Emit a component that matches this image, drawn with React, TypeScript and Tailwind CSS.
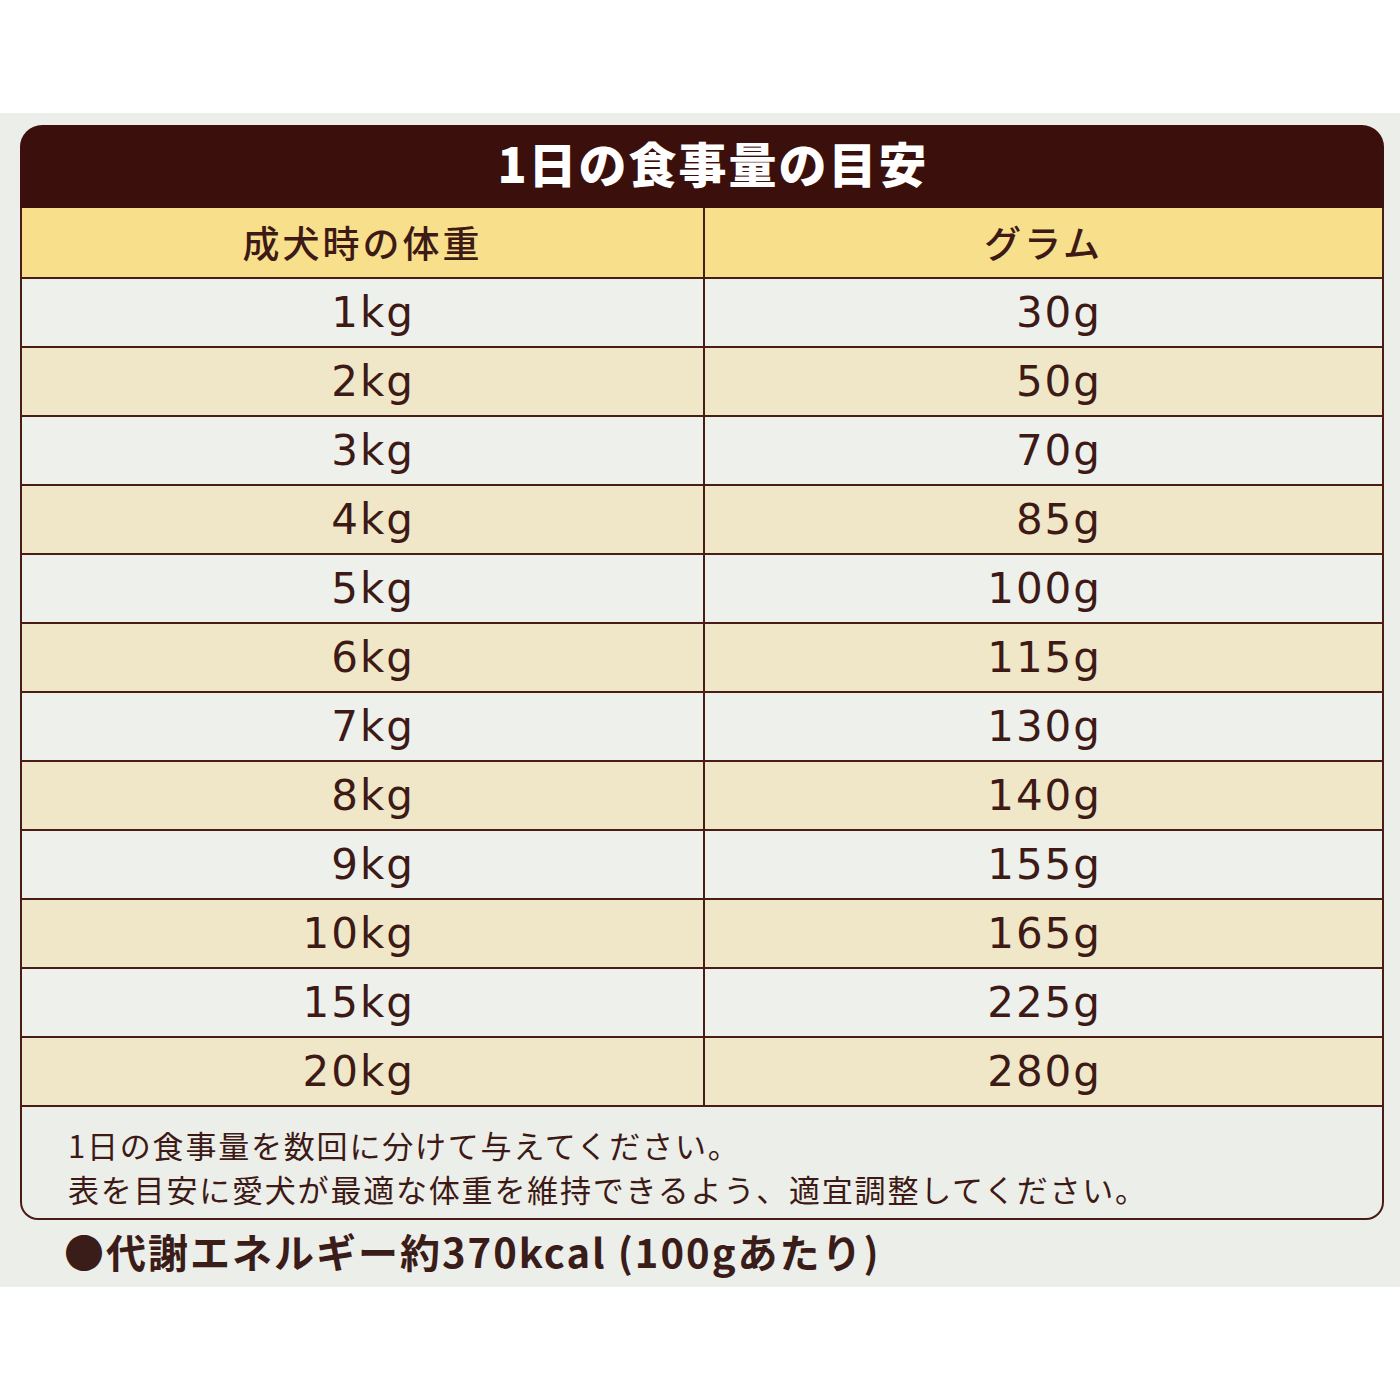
const rows: [string, string][] = [
  ["1kg", "30g"],
  ["2kg", "50g"],
  ["3kg", "70g"],
  ["4kg", "85g"],
  ["5kg", "100g"],
  ["6kg", "115g"],
  ["7kg", "130g"],
  ["8kg", "140g"],
  ["9kg", "155g"],
  ["10kg", "165g"],
  ["15kg", "225g"],
  ["20kg", "280g"],
];

const jp = { fontFamily: '"Noto Sans CJK JP", "Noto Sans", sans-serif' };
const num = { fontFamily: '"DejaVu Sans", "Noto Sans CJK JP", sans-serif' };

export default function App() {
  return (
    <div className="min-h-[1400px] bg-white text-[#3d1a15]" style={jp}>
      <div className="h-[113px]" />
      <div className="h-[1174px] bg-[#eceee9] pt-[12px] pl-[20px] pr-[16px]">
        {/* title bar */}
        <div className="flex h-[83px] items-center justify-center rounded-t-[22px] bg-[#3b0f0c] pb-[10px] pl-[22px]">
          <span className="text-[48px] font-black leading-none tracking-[2px] text-white">
            1日の食事量の目安
          </span>
        </div>

        {/* table */}
        <div className="border-x-2 border-[#4a1c16]">
          <div className="grid h-[69px] grid-cols-[683px_1fr] bg-[#f8df8c] text-[37px] font-medium tracking-[3px]">
            <div className="flex items-center justify-center border-r-2 border-[#4a1c16]">成犬時の体重</div>
            <div className="flex items-center justify-center">グラム</div>
          </div>
          {rows.map(([kg, g], i) => (
            <div
              key={kg}
              className={`grid h-[69px] grid-cols-[683px_1fr] border-t-2 border-[#4a1c16] text-[42px] tracking-[2px] ${
                i % 2 === 0 ? "bg-[#eef0ec]" : "bg-[#f0e7c9]"
              }`}
              style={num}
            >
              <div className="flex items-center justify-end border-r-2 border-[#4a1c16] pr-[288px]">{kg}</div>
              <div className="flex items-center justify-end pr-[280px]">{g}</div>
            </div>
          ))}
        </div>

        {/* note */}
        <div className="h-[115px] rounded-b-[18px] border-2 border-[#4a1c16] bg-[#eceee9] pl-[46px] pt-[16px] text-[31px] leading-[44px] tracking-[1.8px]">
          <div>1日の食事量を数回に分けて与えてください。</div>
          <div>表を目安に愛犬が最適な体重を維持できるよう、適宜調整してください。</div>
        </div>

        <div className="pl-[44px] pt-[6px] text-[40px] font-bold leading-[50px] tracking-[2px] text-[#3a1c18]">
          ●代謝エネルギー約370kcal (100gあたり)
        </div>
      </div>
    </div>
  );
}
